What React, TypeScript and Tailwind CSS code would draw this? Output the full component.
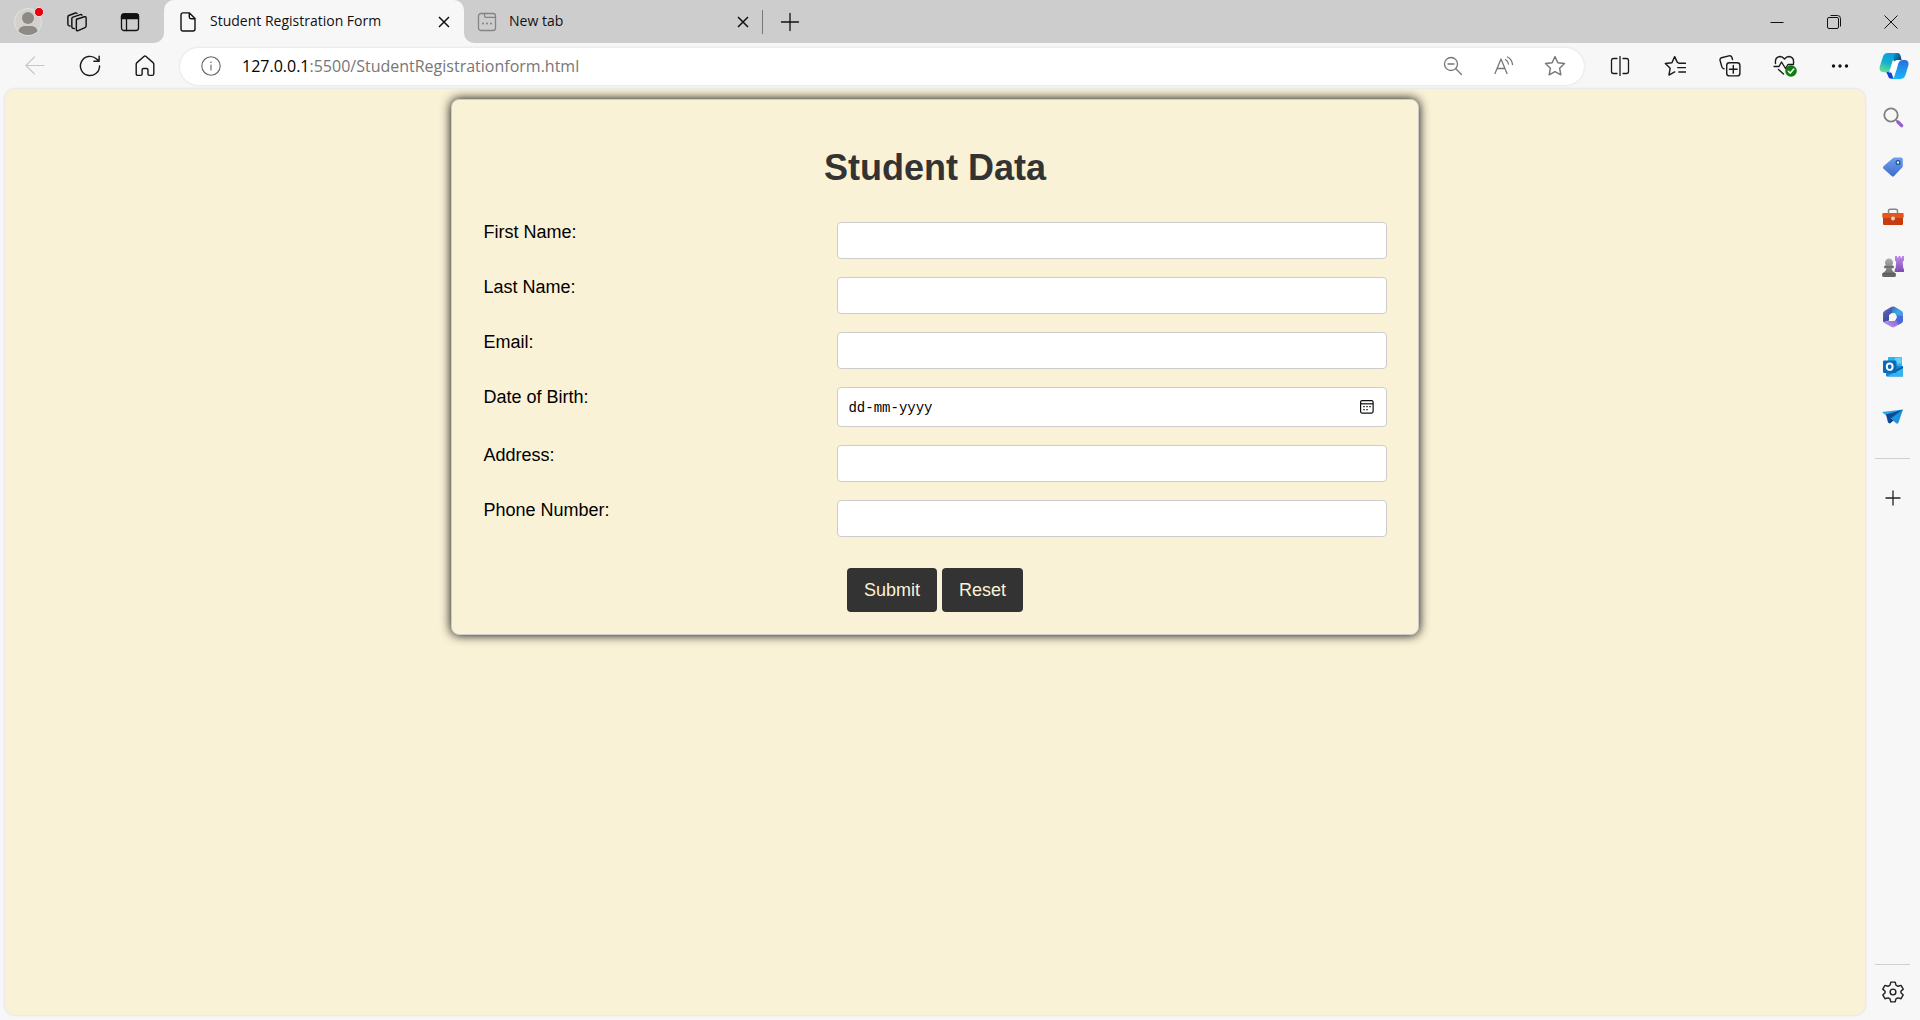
import type { ReactNode } from "react";

type IconProps = { children: ReactNode; size?: string; className?: string };

function Line({ children, size = "size-5", className = "" }: IconProps) {
  return (
    <svg
      viewBox="0 0 20 20"
      className={`${size} ${className} shrink-0`}
      fill="none"
      stroke="currentColor"
      strokeWidth="1.3"
      strokeLinecap="round"
      strokeLinejoin="round"
      aria-hidden="true"
    >
      {children}
    </svg>
  );
}

function Color({ children, size = "size-[22px]" }: IconProps) {
  return (
    <svg viewBox="0 0 22 22" className={`${size} shrink-0`} aria-hidden="true">
      {children}
    </svg>
  );
}

function Profile() {
  return (
    <svg viewBox="0 0 32 32" className="size-8" aria-hidden="true">
      <circle cx="16" cy="16" r="13.5" fill="#d3d1ce" stroke="#e6e4e1" />
      <circle cx="16" cy="12" r="6" fill="#8d8985" />
      <path d="M6.3 25C7.3 21.5 10 20 13 20h6c3 0 5.700 1.500 6.700 5a13.500 13.500 0 0 1-19.400 0Z" fill="#8d8985" />
      <circle cx="27" cy="6" r="4.600" fill="#e8000b" stroke="#f3dede" strokeWidth="1" />
    </svg>
  );
}

function Cross({ size }: { size: string }) {
  return (
    <svg viewBox="0 0 14 14" className={size} stroke="#111" strokeWidth="1.5" aria-hidden="true">
      <path d="M2 2l10 10M12 2L2 12" />
    </svg>
  );
}

const STAR = "M10 1.500l2.600 5.500 6 .800-4.400 4.200 1.100 6-5.300-2.900L4.700 18l1.100-6L1.400 7.800l6-.800Z";

function Copilot() {
  return (
    <svg viewBox="0 0 30 28" className="h-7 w-[30px]" aria-hidden="true">
      <defs>
        <linearGradient id="cpA" x1="0.600" y1="0" x2="0.300" y2="1">
          <stop offset="0" stopColor="#0a9fe2" />
          <stop offset="0.500" stopColor="#12b0cf" />
          <stop offset="1" stopColor="#66e08d" />
        </linearGradient>
        <linearGradient id="cpB" x1="0.500" y1="0" x2="0.400" y2="1">
          <stop offset="0" stopColor="#2870dd" />
          <stop offset="1" stopColor="#17b8fb" />
        </linearGradient>
        <linearGradient id="cpC" x1="0" y1="0" x2="1" y2="0.600">
          <stop offset="0" stopColor="#0aa2d8" />
          <stop offset="1" stopColor="#0b4a7c" />
        </linearGradient>
      </defs>
      <path d="M12 1h6.500c2 0 2.700 1.500 3.300 3.500L22.600 8H19c-2 0-3 1-3.600 3Z" fill="url(#cpC)" />
      <path d="M7 19.500h5l2.500 7.300h-2c-2 0-3-1-3.500-3Z" fill="#1442d6" />
      <path d="M9 1h9c-1.800.300-2.600 1.700-3.200 3.700l-3.600 12C10.400 19.200 9 20.200 7 20.200H4.500C1.500 20.200 0 18 .800 14.500L4 4.500C4.900 2 6.400 1 9 1Z" fill="url(#cpA)" />
      <path d="M21 27h-8.500c1.800-.300 2.700-1.700 3.300-3.700l3.400-12C19.900 8.800 21.300 8 23.300 8h2.400c3 0 4.500 2.200 3.600 5.500l-3 10C25.400 26 23.700 27 21 27Z" fill="url(#cpB)" />
      <path d="M19 8.500h3.500c-2 .300-2.900 1.500-3.400 3.300l-2 7c-.400 1.200-1 1.700-2.200 1.700H9.500c1.300-.500 1.800-1.600 2.200-3l2.200-6.500c.800-2 2.500-2.500 5.100-2.500Z" fill="#fff" />
    </svg>
  );
}

type ToolProps = { label: string; width?: string; children: ReactNode };

function Tool({ label, width = "w-[55px]", children }: ToolProps) {
  return (
    <button type="button" aria-label={label} className={`${width} flex h-full shrink-0 items-center justify-center`}>
      {children}
    </button>
  );
}

function SideTool({ label, children }: { label: string; children: ReactNode }) {
  return (
    <button type="button" aria-label={label} className="flex h-[50px] w-full shrink-0 items-center justify-center">
      {children}
    </button>
  );
}

function TabStrip() {
  return (
    <header className="flex h-[43px] shrink-0 items-center bg-[#cdcdcd] pl-[5px] text-[#111]">
      <Tool label="Profile" width="w-[45px]">
        <Profile />
      </Tool>
      <Tool label="Workspaces" width="w-[53px]">
        <Line size="size-[22px]">
          <path d="M9.500 7.500l7.300-2.300q1.500-.400 1.500 1v7.300q0 1.200-1 1.600l-6.300 2.700q-1.600.600-1.600-1V8.500q0-.700.700-1Z" />
          <path d="M7.600 16l-1.300-.300q-1-.300-1-1.400V7q0-1 1-1.400L13 3.300q1-.300 1.500.500" />
          <path d="M3.600 13.600l-1-.300q-.900-.300-.900-1.300V5.500q0-1 .900-1.400L8.500 1.800q1-.300 1.500.400" />
        </Line>
      </Tool>
      <Tool label="Tab actions" width="w-[53px]">
        <Line>
          <rect x="1.500" y="2" width="17" height="16.500" rx="2.500" />
          <path d="M1.500 6.500V4.500Q1.500 2 4 2h12q2.500 0 2.500 2.500v2Z" fill="currentColor" />
          <path d="M6.500 7v11.500" />
        </Line>
      </Tool>

      <div className="relative ml-2 flex h-full w-[300px] items-center rounded-t-[10px] bg-[#f7f7f7] pl-4">
        <span className="absolute bottom-0 -left-2.5 size-2.5 bg-[#f7f7f7]">
          <span className="block size-full rounded-br-[10px] bg-[#cdcdcd]" />
        </span>
        <span className="absolute -right-2.5 bottom-0 size-2.5 bg-[#f7f7f7]">
          <span className="block size-full rounded-bl-[10px] bg-[#cdcdcd]" />
        </span>
        <svg viewBox="0 0 16 20" className="h-5 w-4" fill="none" stroke="#111" strokeWidth="1.400" strokeLinejoin="round" aria-hidden="true">
          <path d="M3 .900h6.500L15 6.500V17q0 2-2 2H3q-2 0-2-2V3Q1 .900 3 .900ZM9.300 1v4q0 1.700 1.700 1.700h4" />
        </svg>
        <span className="ml-3.5 flex-1 pb-0.5 text-[14px] leading-5">Student Registration Form</span>
        <button type="button" aria-label="Close tab" className="mr-3 p-px">
          <Cross size="size-3.5" />
        </button>
      </div>

      <div className="flex h-full w-[298px] items-center pl-[13px]">
        <Line className="text-[#858585]">
          <rect x="1.500" y="1.500" width="17" height="17" rx="2.500" />
          <path d="M7.500 1.500V4q0 1.300 1.300 1.300h9.700" />
          <path d="M6 11.500h.100M10 11.500h.100M14 11.500h.100" strokeWidth="2" />
        </Line>
        <span className="ml-3 flex-1 pb-0.5 text-[14px] leading-5">New tab</span>
        <button type="button" aria-label="Close tab" className="mr-[11px] p-px">
          <Cross size="size-3.5" />
        </button>
      </div>
      <span className="h-6 w-px bg-[#777]" />
      <Tool label="Open new tab" width="w-[53px]">
        <Line>
          <path d="M10 1.500v17M1.500 10h17" />
        </Line>
      </Tool>

      <div className="ml-auto flex h-full items-center">
        <Tool label="Minimize" width="w-[57px]">
          <svg viewBox="0 0 14 14" className="size-3.5" stroke="#111" aria-hidden="true">
            <path d="M0.500 7.500h13" />
          </svg>
        </Tool>
        <Tool label="Restore" width="w-[57px]">
          <svg viewBox="0 0 14 14" className="size-3.5" fill="none" stroke="#111" aria-hidden="true">
            <rect x="0.500" y="2.500" width="11" height="11" rx="1.500" />
            <path d="M3.500.500h7q3 0 3 3v8" />
          </svg>
        </Tool>
        <Tool label="Close" width="w-[58px]">
          <svg viewBox="0 0 14 14" className="size-3.5" stroke="#111" aria-hidden="true">
            <path d="M.500.500l13 13M13.500.500l-13 13" />
          </svg>
        </Tool>
      </div>
    </header>
  );
}

function Toolbar() {
  return (
    <nav className="flex h-[46px] shrink-0 items-center pl-[7px] text-[#1a1a1a]">
      <Tool label="Back">
        <Line className="text-[#c8c8c8]">
          <path d="M.800 9.500h18.500M9.500 1L.800 9.500 9.500 18" strokeWidth="1.100" />
        </Line>
      </Tool>
      <Tool label="Refresh">
        <Line size="size-[22px]">
          <path d="M18.700 10a8.700 8.700 0 1 1-3-6.600L18.200 5.500M18.300 1v4.700h-4.800" />
        </Line>
      </Tool>
      <Tool label="Home">
        <Line size="size-[22px]">
          <path d="M2 8.500q0-1 .700-1.600L9 1.400q1-.800 2 0l6.300 5.500q.700.600.700 1.600V17q0 1.500-1.500 1.500H14q-1.300 0-1.300-1.300v-3.700q0-1.300-1.300-1.300H8.700q-1.300 0-1.300 1.300v3.700q0 1.300-1.300 1.300H3.500Q2 18.500 2 17Z" />
        </Line>
      </Tool>

      <div className="mx-2 flex h-[37px] flex-1 items-center rounded-full bg-white pr-1 text-[#777] shadow-[0_0_3px_rgba(0,0,0,0.12)]">
        <Tool label="View site information" width="w-[62px]">
          <Line className="text-[#666]">
            <circle cx="10" cy="10" r="9.200" strokeWidth="1.100" />
            <path d="M10 9v5" strokeWidth="1.100" />
            <path d="M10 6.200v.100" strokeWidth="1.600" />
          </Line>
        </Tool>
        <span className="flex-1 text-[16px] leading-6">
          <span className="text-black">127.0.0.1</span>:5500/StudentRegistrationform.html
        </span>
        <Tool label="Zoom out" width="w-[51px]">
          <Line>
            <circle cx="8" cy="8" r="6.500" />
            <path d="M5 8h6M12.800 12.800L18.500 18.500" />
          </Line>
        </Tool>
        <Tool label="Read aloud" width="w-[51px]">
          <Line>
            <path d="M1 17.500L7 3l6 14.500M3 12.500h8M11.500 3.500q2.500 1.500 3 4.500M13.500 1q4.500 2.500 5 7.500" />
          </Line>
        </Tool>
        <Tool label="Add to favorites" width="w-[51px]">
          <Line size="size-[22px]">
            <path d={STAR} />
          </Line>
        </Tool>
      </div>

      <Tool label="Split screen">
        <Line>
          <path d="M10 .500v19M7 2.500H3.500q-2 0-2 2v11q0 2 2 2H7M13 2.500h3.500q2 0 2 2v11q0 2-2 2H13" />
        </Line>
      </Tool>
      <Tool label="Favorites">
        <Line size="size-[22px]">
          <path d="M12 6.500L9.700 1.500 7.200 7l-6 .800 4.400 4.200-1.100 6.200L9.700 15.400M13.500 7.500h6M12.500 11.500h7M13.500 15.500h6M12 6.500l1.500 1" />
        </Line>
      </Tool>
      <Tool label="Collections">
        <Line size="size-[22px]">
          <rect x="7" y="7" width="12" height="12" rx="2.500" />
          <path d="M13 9.500v7M9.500 13h7M4.500 12.500q-1.500-.300-1.900-1.700L1 5q-.400-2 1.300-2.500L9 .800q2-.500 2.700 1.300l.600 2" />
        </Line>
      </Tool>
      <Tool label="Browser essentials">
        <svg viewBox="0 0 24 22" className="h-[22px] w-6" fill="none" stroke="currentColor" strokeWidth="1.400" strokeLinecap="round" strokeLinejoin="round" aria-hidden="true">
          <path d="M2.500 8.500q-.800-6.500 4.500-7 2.500 0 4.500 2.500 2-2.500 4.500-2.500 5.300.500 4.500 7M1 11.500h5l2.500-4.500 4 6.500L15 9.500h5.500M5.500 14.500l5 4.500" />
          <circle cx="18" cy="16" r="5.800" fill="#107c10" stroke="none" />
          <path d="M15.300 16.200l2 1.900 3.500-4" stroke="#fff" strokeWidth="1.500" />
        </svg>
      </Tool>
      <Tool label="Settings and more">
        <svg viewBox="0 0 20 20" className="size-5" fill="#111" aria-hidden="true">
          <circle cx="3.500" cy="10" r="1.700" />
          <circle cx="10" cy="10" r="1.700" />
          <circle cx="16.500" cy="10" r="1.700" />
        </svg>
      </Tool>
      <Tool label="Copilot" width="w-[53px]">
        <Copilot />
      </Tool>
    </nav>
  );
}

function SideBar() {
  return (
    <aside className="flex w-[55px] shrink-0 flex-col items-center pt-[3px] pb-[17px] text-[#222]">
      <SideTool label="Search">
        <Color>
          <circle cx="9" cy="9" r="6.700" fill="none" stroke="#808080" strokeWidth="1.800" />
          <path d="M13.800 13.800l1.500 1.500" stroke="#888" strokeWidth="1.600" />
          <path d="M16 16l3.600 3.600" stroke="#9160cc" strokeWidth="3.400" strokeLinecap="round" />
        </Color>
      </SideTool>
      <SideTool label="Shopping">
        <Color>
          <defs>
            <linearGradient id="tag" x1="0" y1="0" x2="0" y2="1">
              <stop offset="0" stopColor="#6da0ef" />
              <stop offset="1" stopColor="#3f6ccb" />
            </linearGradient>
          </defs>
          <path d="M12.500 1.500H19q1.800 0 1.800 1.800v6.500q0 1-.700 1.700l-8 8.400q-1.200 1.200-2.400 0L1.500 12.700q-1.200-1.200 0-2.400l9.300-8.100q.700-.700 1.700-.700Z" fill="url(#tag)" />
          <circle cx="16" cy="6.500" r="1.900" fill="#e5edf9" stroke="#174a92" strokeWidth="1.200" />
        </Color>
      </SideTool>
      <SideTool label="Tools">
        <Color>
          <path d="M6.500 7V5q0-1.800 1.800-1.800h5.400q1.800 0 1.800 1.800v2" fill="none" stroke="#858585" strokeWidth="1.500" />
          <rect x="1" y="11" width="20" height="8" rx="1.300" fill="#c73b0d" />
          <rect x="0.300" y="7" width="21.400" height="5" rx="1" fill="#e5561c" />
          <circle cx="11" cy="12.500" r="2" fill="#d8d8d8" />
        </Color>
      </SideTool>
      <SideTool label="Games">
        <Color>
          <defs>
            <linearGradient id="rook" x1="0" y1="0" x2="0" y2="1">
              <stop offset="0" stopColor="#c18af0" />
              <stop offset="1" stopColor="#7b4dae" />
            </linearGradient>
            <linearGradient id="pawn" x1="0" y1="0" x2="0" y2="1">
              <stop offset="0" stopColor="#adadad" />
              <stop offset="1" stopColor="#616161" />
            </linearGradient>
          </defs>
          <path d="M13 0h2v1.500h1.500V0h2v1.500H20V0h2v4.500l-1.300 1.200.500 6 1 1.800V16h-9.500v-2.500l1-1.800.500-6L13 4.500Z" fill="url(#rook)" />
          <path d="M7 2.500a4 4 0 0 1 3.200 6.400l1.600 1v2.300H9.500q.500 3 3 4.300 1.500.800 1.500 2.500 0 2-1.500 2H1.500q-1.500 0-1.500-2 0-1.700 1.500-2.500 2.500-1.300 3-4.300H2.200V9.900l1.600-1A4 4 0 0 1 7 2.500Z" fill="url(#pawn)" />
          <path d="M2.200 11h9.600M.500 17.800h13" stroke="#555" strokeWidth="1" />
        </Color>
      </SideTool>
      <SideTool label="Microsoft 365">
        <Color>
          <defs>
            <linearGradient id="mA" x1="0" y1="0" x2="1" y2="1">
              <stop offset="0" stopColor="#405ca8" />
              <stop offset="0.500" stopColor="#41a7e4" />
              <stop offset="1" stopColor="#4b8fe8" />
            </linearGradient>
            <linearGradient id="mB" x1="0" y1="0" x2="0.600" y2="1">
              <stop offset="0" stopColor="#7866c9" />
              <stop offset="1" stopColor="#294d96" />
            </linearGradient>
            <linearGradient id="mC" x1="0" y1="1" x2="1" y2="0">
              <stop offset="0" stopColor="#c59cf0" />
              <stop offset="1" stopColor="#704cbc" />
            </linearGradient>
          </defs>
          <path d="M9.500.800Q11 0 12.500.800l7 4Q21 5.700 21 7.500v6.500L14.500 12 13 7.500H8Z" fill="url(#mA)" />
          <path d="M9.500.800l-6.700 4Q1 5.700 1 7.500v7q0 1 .700 1.700L7 14.500V9l3-2Q10.500 3 9.500.800Z" fill="url(#mB)" />
          <path d="M1.500 16q.500.800 1.300 1.200l6.700 3.900q1.500.800 3 0L19.500 17Q21 16 21 14v-3l-5.500-1-1.300 3L11 15H7Z" fill="url(#mC)" />
          <path d="M21 10v4q0 2-1.500 3l-3 1.700L14 13.500l1.500-4Z" fill="#4a68da" />
          <path d="M9 7.300h4l2 3.700-2 3.700H9L7 11Z" fill="#f7f7f7" />
        </Color>
      </SideTool>
      <SideTool label="Outlook">
        <Color>
          <rect x="6" y="1" width="14" height="13" rx="1" fill="#2fb2ec" />
          <rect x="13" y="1.500" width="6.500" height="6" fill="#67d3f8" />
          <path d="M4 10h17v9.500q0 1-1 1H5q-1 0-1-1Z" fill="#1787d3" />
          <path d="M21 10.500v9q0 .700-.600 1L12 15Z" fill="#0a4f92" />
          <path d="M5 20.500L21 12v7.500q0 1-1 1Z" fill="#35b5ee" />
          <rect x="1" y="4.500" width="13.500" height="12.500" rx="1.200" fill="#0969bd" />
          <ellipse cx="7.700" cy="10.700" rx="2.900" ry="3.200" fill="none" stroke="#fff" strokeWidth="1.900" />
        </Color>
      </SideTool>
      <SideTool label="Drop">
        <Color>
          <path d="M0 6l21-2.500L6 11Z" fill="#27a7e5" />
          <path d="M4 8.500L21 3.500 8 17.500l-2-1Z" fill="#0b4a96" />
          <path d="M8.500 12.500L21 3.500 16.500 16.500q-.500 1.500-2 1Z" fill="#1d95dd" />
          <path d="M7.500 17.500l2-4 2 1Z" fill="#0a356e" />
        </Color>
      </SideTool>
      <hr className="mt-4 mb-3.5 w-[35px] border-[#cfcfcf]" />
      <SideTool label="Customize sidebar">
        <Line>
          <path d="M10 3v14M3 10h14" />
        </Line>
      </SideTool>
      <hr className="mt-auto w-[35px] border-[#cfcfcf]" />
      <button type="button" aria-label="Settings" className="mt-4">
        <Line size="size-[22px]">
          <path d="M8 1h4l.700 2.800 1.800 1 2.800-.800 2 3.400L17.200 9.400v1.300l2.100 2-2 3.400-2.800-.800-1.800 1L12 19H8l-.700-2.700-1.800-1-2.800.800-2-3.400 2.100-2V9.400L.700 7.400l2-3.400 2.800.800 1.800-1Z" />
          <circle cx="10" cy="10" r="2.600" />
        </Line>
      </button>
    </aside>
  );
}

const FIELDS = [
  { id: "first-name", label: "First Name:", type: "text" },
  { id: "last-name", label: "Last Name:", type: "text" },
  { id: "email", label: "Email:", type: "email" },
  { id: "dob", label: "Date of Birth:", type: "date" },
  { id: "address", label: "Address:", type: "text" },
  { id: "phone", label: "Phone Number:", type: "tel" },
];

function Field({ id, label, type }: { id: string; label: string; type: string }) {
  return (
    <div className="grid grid-cols-[354fr_549fr]">
      <label htmlFor={id} className="text-[18px] leading-5">
        {label}
      </label>
      {type === "date" ? (
        <div className="flex h-10 items-center rounded-[4px] border border-[#ccc] bg-white pr-[11px] pl-2.5">
          <input
            id={id}
            type="text"
            placeholder="dd-mm-yyyy"
            className="min-w-0 flex-1 pt-0.5 font-['Liberation_Mono',monospace] text-[14px] leading-5 outline-none placeholder:text-black"
          />
          <button type="button" aria-label="Pick a date">
            <svg viewBox="0 0 16 16" className="size-4" fill="none" stroke="#111" strokeWidth="1.200" aria-hidden="true">
              <rect x="1.600" y="1.600" width="12.500" height="12.500" rx="1.500" />
              <path d="M1.600 4.800h12.500" />
              <path d="M4.300 7.600h1.400M7.300 7.600h1.400M10.300 7.600h1.400M4.300 10.600h1.400M7.300 10.600h1.400" strokeWidth="1.400" />
            </svg>
          </button>
        </div>
      ) : (
        <input id={id} type={type} className="h-[37px] w-full rounded-[4px] border border-[#ccc] bg-white px-2.5 outline-none" />
      )}
    </div>
  );
}

function StudentForm() {
  return (
    <form className="mx-auto w-[52%] rounded-[8px] border border-[#ccc] bg-[#faf2d7] px-[31px] pt-12 pb-[22px] font-['Liberation_Sans',Arial,sans-serif] text-black shadow-[0_0_11px_#000]">
      <h1 className="text-center text-[36px] leading-10 font-bold text-[#333]">Student Data</h1>
      <div className="mt-[34px] flex flex-col gap-[18px]">
        {FIELDS.map((f) => (
          <Field key={f.id} {...f} />
        ))}
      </div>
      <div className="mt-[31px] flex justify-center gap-[5px]">
        <button type="submit" className="h-11 rounded-[4px] bg-[#333] px-[17px] text-[18px] leading-5 text-[#faf2d7]">
          Submit
        </button>
        <button type="reset" className="h-11 rounded-[4px] bg-[#333] px-[17px] text-[18px] leading-5 text-[#faf2d7]">
          Reset
        </button>
      </div>
    </form>
  );
}

export default function App() {
  return (
    <div className="flex h-screen flex-col overflow-hidden bg-[#f7f7f7] font-['Open_Sans','Noto_Sans',sans-serif]">
      <TabStrip />
      <Toolbar />
      <div className="flex min-h-0 flex-1">
        <main className="mb-[5px] ml-[5px] flex-1 overflow-hidden rounded-[10px] bg-[#faf2d7] pt-2.5 shadow-[0_0_3px_rgba(0,0,0,0.15)]">
          <StudentForm />
        </main>
        <SideBar />
      </div>
    </div>
  );
}
